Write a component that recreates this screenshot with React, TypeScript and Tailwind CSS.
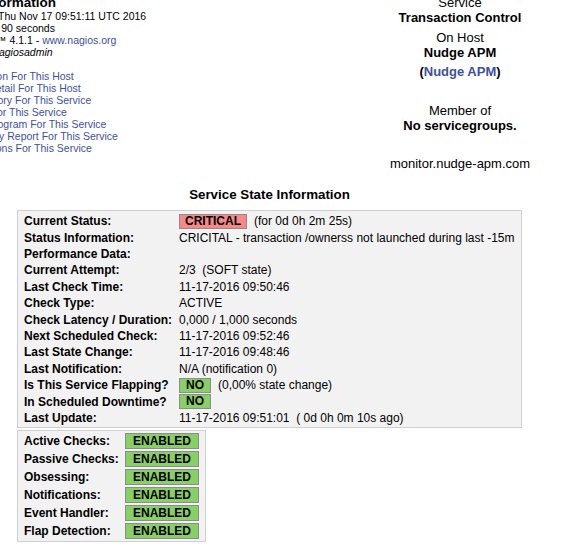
import React from 'react';

const statusRows: { label: string; value: React.ReactNode }[] = [
  {
    label: 'Current Status:',
    value: (
      <>
        <span className="inline-block border border-[#8c8c8c] bg-[#f88888] px-[5px] font-bold leading-[13px]">CRITICAL</span>
        <span className="ml-[7px]">(for 0d 0h 2m 25s)</span>
      </>
    ),
  },
  { label: 'Status Information:', value: 'CRICITAL - transaction /ownerss not launched during last -15m' },
  { label: 'Performance Data:', value: '' },
  { label: 'Current Attempt:', value: '2/3\u00a0\u00a0(SOFT state)' },
  { label: 'Last Check Time:', value: '11-17-2016 09:50:46' },
  { label: 'Check Type:', value: 'ACTIVE' },
  { label: 'Check Latency / Duration:', value: '0,000 / 1,000 seconds' },
  { label: 'Next Scheduled Check:', value: '11-17-2016 09:52:46' },
  { label: 'Last State Change:', value: '11-17-2016 09:48:46' },
  { label: 'Last Notification:', value: 'N/A (notification 0)' },
  {
    label: 'Is This Service Flapping?',
    value: (
      <>
        <span className="inline-block border border-[#8c8c8c] bg-[#88d066] px-[6px] font-bold leading-[13px]">NO</span>
        <span className="ml-[7px]">(0,00% state change)</span>
      </>
    ),
  },
  {
    label: 'In Scheduled Downtime?',
    value: <span className="inline-block border border-[#8c8c8c] bg-[#88d066] px-[6px] font-bold leading-[13px]">NO</span>,
  },
  { label: 'Last Update:', value: '11-17-2016 09:51:01\u00a0\u00a0( 0d 0h 0m 10s ago)' },
];

const toggles = ['Active Checks:', 'Passive Checks:', 'Obsessing:', 'Notifications:', 'Event Handler:', 'Flap Detection:'];

const links = [
  'View Information For This Host',
  'View Status Detail For This Host',
  'View Alert History For This Service',
  'View Trends For This Service',
  'View Alert Histogram For This Service',
  'View Availability Report For This Service',
  'View Notifications For This Service',
];

export default function App() {
  return (
    <div className="w-[561px] h-[549px] overflow-hidden bg-white text-black" style={{ fontFamily: '"Liberation Sans", Arial, sans-serif' }}>
      {/* top info row */}
      <div className="flex -mt-[5px]">
        <div className="w-[429px] -ml-[70px] shrink-0 whitespace-nowrap">
          <div className="text-[13.5px] font-bold leading-[15px]">Service Information</div>
          <div className="text-[10.5px] leading-[12px]">
            <div>Last Updated: Thu Nov 17 09:51:11 UTC 2016</div>
            <div>Updated every 90 seconds</div>
            <div>
              Nagios® Core™ 4.1.1 - <a className="text-[#3d50a0]">www.nagios.org</a>
            </div>
            <div>
              Logged in as <i>nagiosadmin</i>
            </div>
            <div className="h-[12px]" />
            {links.map((l) => (
              <div key={l}>
                <a className="text-[#3d50a0]">{l}</a>
              </div>
            ))}
          </div>
        </div>
        <div className="w-[202px] shrink-0 text-center text-[13px] leading-[15px] whitespace-nowrap">
          <div>Service</div>
          <div className="font-bold">Transaction Control</div>
          <div className="mt-[5px]">On Host</div>
          <div className="font-bold">Nudge APM</div>
          <div className="mt-[4px] font-bold">
            (<a className="text-[#3d50a0]">Nudge APM</a>)
          </div>
          <div className="mt-[24px]">Member of</div>
          <div className="font-bold">No servicegroups.</div>
          <div className="mt-[23px]">monitor.nudge-apm.com</div>
        </div>
      </div>

      {/* service state */}
      <div className="ml-[17px] w-[505px]">
        <div className="mt-[16px] text-center text-[13.33px] font-bold leading-[16px]">Service State Information</div>
        <div className="mt-[7px] border border-[#d0d0d0] bg-[#f3f2f2] px-[6px] pt-[2px] pb-[1px] text-[12px] whitespace-nowrap">
          {statusRows.map((r) => (
            <div key={r.label} className="flex h-[16.4px] items-center">
              <div className="w-[155px] shrink-0 font-bold">{r.label}</div>
              <div className="flex items-center">{r.value}</div>
            </div>
          ))}
        </div>
      </div>

      <div className="ml-[17px] mt-[2px] w-fit border border-[#d0d0d0] bg-[#f3f2f2] px-[6px] py-[1px] text-[12px] whitespace-nowrap">
        {toggles.map((t) => (
          <div key={t} className="flex h-[18px] items-center">
            <div className="w-[101px] font-bold">{t}</div>
            <span className="inline-block w-[74px] border border-[#8c8c8c] bg-[#88d066] text-center font-bold leading-[14px]">ENABLED</span>
          </div>
        ))}
      </div>
    </div>
  );
}
